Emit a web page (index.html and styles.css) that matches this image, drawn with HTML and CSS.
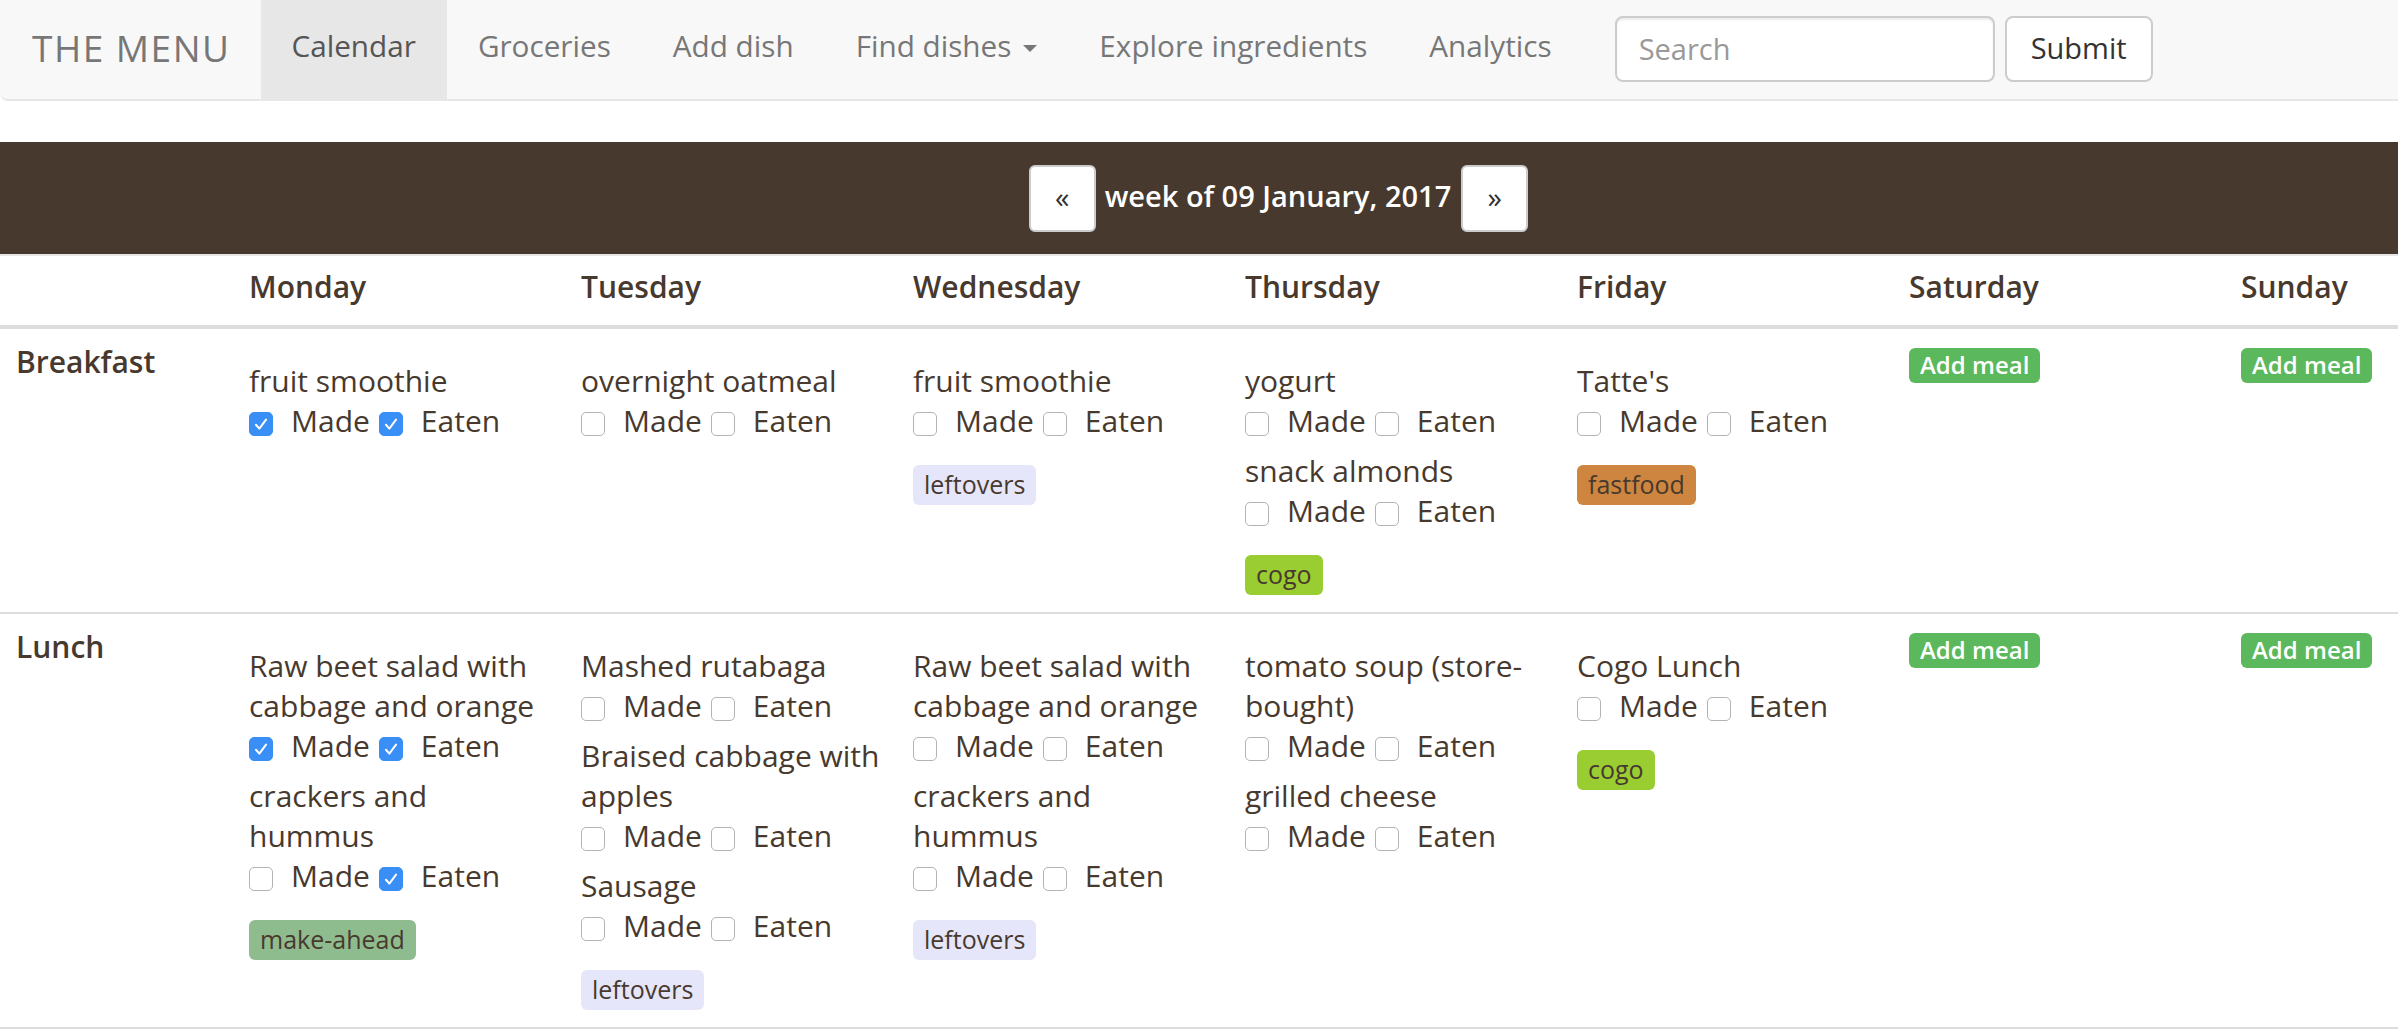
FILE: index.html
```html
<!DOCTYPE html>
<html lang="en">
<head>
<meta charset="utf-8">
<title>The Menu</title>
<link rel="stylesheet" href="styles.css">
</head>
<body>
<nav class="navbar">
  <a class="brand">THE MENU</a>
  <ul class="nav">
    <li class="active"><a>Calendar</a></li>
    <li><a>Groceries</a></li>
    <li><a>Add dish</a></li>
    <li><a>Find dishes<span class="caret"></span></a></li>
    <li><a>Explore ingredients</a></li>
    <li><a>Analytics</a></li>
  </ul>
  <form class="search">
    <input class="search-input" type="text" placeholder="Search">
    <button class="submit" type="button">Submit</button>
  </form>
</nav>

<div class="page">
  <div class="sheet">
    <div class="weekbar">
      <button class="pager" type="button">&laquo;</button>
      <span class="week">week of 09 January, 2017</span>
      <button class="pager" type="button">&raquo;</button>
    </div>

    <div class="row head">
      <div class="cell"></div>
      <div class="cell">Monday</div>
      <div class="cell">Tuesday</div>
      <div class="cell">Wednesday</div>
      <div class="cell">Thursday</div>
      <div class="cell">Friday</div>
      <div class="cell">Saturday</div>
      <div class="cell">Sunday</div>
    </div>

    <div class="row">
      <div class="cell label">Breakfast</div>
      <div class="cell">
        <div class="meals">
          <div class="dish"><div class="name">fruit smoothie</div>
            <div class="checks"><span class="cb on"><svg viewBox="0 0 24 24"><path d="M6.5 12.8 L10.2 17 L17.5 7.2"/></svg></span><span class="ck">Made</span><span class="cb on"><svg viewBox="0 0 24 24"><path d="M6.5 12.8 L10.2 17 L17.5 7.2"/></svg></span><span class="ck">Eaten</span></div>
          </div>
        </div>
      </div>
      <div class="cell">
        <div class="meals">
          <div class="dish"><div class="name">overnight oatmeal</div>
            <div class="checks"><span class="cb"></span><span class="ck">Made</span><span class="cb"></span><span class="ck">Eaten</span></div>
          </div>
        </div>
      </div>
      <div class="cell">
        <div class="meals">
          <div class="dish"><div class="name">fruit smoothie</div>
            <div class="checks"><span class="cb"></span><span class="ck">Made</span><span class="cb"></span><span class="ck">Eaten</span></div>
          </div>
        </div>
        <div class="tags"><span class="tag lavender">leftovers</span></div>
      </div>
      <div class="cell">
        <div class="meals">
          <div class="dish"><div class="name">yogurt</div>
            <div class="checks"><span class="cb"></span><span class="ck">Made</span><span class="cb"></span><span class="ck">Eaten</span></div>
          </div>
          <div class="dish"><div class="name">snack almonds</div>
            <div class="checks"><span class="cb"></span><span class="ck">Made</span><span class="cb"></span><span class="ck">Eaten</span></div>
          </div>
        </div>
        <div class="tags"><span class="tag yellowgreen">cogo</span></div>
      </div>
      <div class="cell">
        <div class="meals">
          <div class="dish"><div class="name">Tatte's</div>
            <div class="checks"><span class="cb"></span><span class="ck">Made</span><span class="cb"></span><span class="ck">Eaten</span></div>
          </div>
        </div>
        <div class="tags"><span class="tag peru">fastfood</span></div>
      </div>
      <div class="cell"><button class="add" type="button">Add meal</button></div>
      <div class="cell"><button class="add" type="button">Add meal</button></div>
    </div>

    <div class="row">
      <div class="cell label">Lunch</div>
      <div class="cell">
        <div class="meals">
          <div class="dish"><div class="name">Raw beet salad with cabbage and orange</div>
            <div class="checks"><span class="cb on"><svg viewBox="0 0 24 24"><path d="M6.5 12.8 L10.2 17 L17.5 7.2"/></svg></span><span class="ck">Made</span><span class="cb on"><svg viewBox="0 0 24 24"><path d="M6.5 12.8 L10.2 17 L17.5 7.2"/></svg></span><span class="ck">Eaten</span></div>
          </div>
          <div class="dish"><div class="name">crackers and hummus</div>
            <div class="checks"><span class="cb"></span><span class="ck">Made</span><span class="cb on"><svg viewBox="0 0 24 24"><path d="M6.5 12.8 L10.2 17 L17.5 7.2"/></svg></span><span class="ck">Eaten</span></div>
          </div>
        </div>
        <div class="tags"><span class="tag seagreen">make-ahead</span></div>
      </div>
      <div class="cell">
        <div class="meals">
          <div class="dish"><div class="name">Mashed rutabaga</div>
            <div class="checks"><span class="cb"></span><span class="ck">Made</span><span class="cb"></span><span class="ck">Eaten</span></div>
          </div>
          <div class="dish"><div class="name">Braised cabbage with apples</div>
            <div class="checks"><span class="cb"></span><span class="ck">Made</span><span class="cb"></span><span class="ck">Eaten</span></div>
          </div>
          <div class="dish"><div class="name">Sausage</div>
            <div class="checks"><span class="cb"></span><span class="ck">Made</span><span class="cb"></span><span class="ck">Eaten</span></div>
          </div>
        </div>
        <div class="tags"><span class="tag lavender">leftovers</span></div>
      </div>
      <div class="cell">
        <div class="meals">
          <div class="dish"><div class="name">Raw beet salad with cabbage and orange</div>
            <div class="checks"><span class="cb"></span><span class="ck">Made</span><span class="cb"></span><span class="ck">Eaten</span></div>
          </div>
          <div class="dish"><div class="name">crackers and hummus</div>
            <div class="checks"><span class="cb"></span><span class="ck">Made</span><span class="cb"></span><span class="ck">Eaten</span></div>
          </div>
        </div>
        <div class="tags"><span class="tag lavender">leftovers</span></div>
      </div>
      <div class="cell">
        <div class="meals">
          <div class="dish"><div class="name">tomato soup (store-bought)</div>
            <div class="checks"><span class="cb"></span><span class="ck">Made</span><span class="cb"></span><span class="ck">Eaten</span></div>
          </div>
          <div class="dish"><div class="name">grilled cheese</div>
            <div class="checks"><span class="cb"></span><span class="ck">Made</span><span class="cb"></span><span class="ck">Eaten</span></div>
          </div>
        </div>
      </div>
      <div class="cell">
        <div class="meals">
          <div class="dish"><div class="name">Cogo Lunch</div>
            <div class="checks"><span class="cb"></span><span class="ck">Made</span><span class="cb"></span><span class="ck">Eaten</span></div>
          </div>
        </div>
        <div class="tags"><span class="tag yellowgreen">cogo</span></div>
      </div>
      <div class="cell"><button class="add" type="button">Add meal</button></div>
      <div class="cell"><button class="add" type="button">Add meal</button></div>
    </div>
  </div>
</div>
</body>
</html>
```

FILE: styles.css
```css
html, body {
  margin: 0;
  padding: 0;
  background: #ffffff;
}
body {
  font-family: "Open Sans", "Noto Sans", sans-serif;
  font-size: 30px;
  line-height: 40px;
  color: #48392e;
  overflow-x: hidden;
}

/* navbar */
.navbar {
  display: flex;
  align-items: stretch;
  height: 99px;
  background: #f8f8f8;
  border-bottom: 2px solid #e7e7e7;
  border-bottom-left-radius: 8px;
}
.brand {
  display: flex;
  align-items: center;
  padding: 0 30px 4px 32px;
  font-size: 37px;
  letter-spacing: 1.5px;
  color: #777777;
}
.nav {
  display: flex;
  list-style: none;
  margin: 0;
  padding: 0;
}
.nav li {
  display: flex;
}
.nav a {
  display: flex;
  align-items: center;
  padding: 0 31px 7px 31px;
  color: #777777;
  font-size: 29.7px;
}
.nav li.active a {
  background: #e7e7e7;
  color: #555555;
}
.caret {
  display: inline-block;
  width: 0;
  height: 0;
  margin-left: 12px;
  margin-top: 4px;
  border-top: 7px solid #777777;
  border-left: 7px solid transparent;
  border-right: 7px solid transparent;
}
.search {
  display: flex;
  align-items: center;
  gap: 10px;
  margin: 0 0 0 32px;
  padding-bottom: 2px;
}
.search-input {
  box-sizing: border-box;
  width: 380px;
  height: 66px;
  padding: 0 22px;
  border: 2px solid #cccccc;
  border-radius: 8px;
  font-family: "Open Sans", "Noto Sans", sans-serif;
  font-size: 29px;
  color: #555555;
  background: #ffffff;
  box-shadow: inset 0 2px 2px rgba(0,0,0,0.075);
}
.search-input::placeholder {
  color: #999999;
}
.submit {
  box-sizing: border-box;
  width: 148px;
  height: 66px;
  border: 2px solid #cccccc;
  border-radius: 8px;
  background: #ffffff;
  color: #333333;
  font-family: "Open Sans", "Noto Sans", sans-serif;
  font-size: 29px;
  padding: 0 0 3px 0;
}

/* page */
.page {
  margin-top: 41px;
  width: 100%;
  overflow: hidden;
}
.sheet {
  width: 2557px;
}
.weekbar {
  display: flex;
  align-items: center;
  justify-content: center;
  gap: 9px;
  height: 112px;
  background: #48392e;
}
.pager {
  box-sizing: border-box;
  width: 67px;
  height: 67px;
  border: 2px solid #cccccc;
  border-radius: 6px;
  background: #ffffff;
  color: #333333;
  font-family: "Open Sans", "Noto Sans", sans-serif;
  font-size: 29px;
  padding: 0 0 4px 0;
}
.week {
  color: #ffffff;
  font-weight: 600;
  font-size: 29px;
  padding: 0 1px 5px 0;
}

/* table rows */
.row {
  display: grid;
  grid-template-columns: 233px repeat(7, 332px);
  border-bottom: 2px solid #dddddd;
}
.row.head {
  border-top: 2px solid #e6e6e6;
  border-bottom: 4px solid #dddddd;
}
.cell {
  padding: 12px 12px 17px 16px;
}
.row.head .cell {
  padding: 11px 16px 18px 16px;
  font-weight: 600;
}
.cell.label {
  font-weight: 600;
  padding-top: 13px;
}
.meals {
  margin-top: 20px;
}
.dish {
  margin-bottom: 10px;
}
.checks {
  display: flex;
  align-items: center;
  height: 40px;
}
.cb {
  box-sizing: border-box;
  display: flex;
  align-items: center;
  justify-content: center;
  width: 24px;
  height: 24px;
  margin-top: 6px;
  border: 1.5px solid #b3b3b3;
  border-radius: 5px;
  background: #ffffff;
}
.cb.on {
  background: #3a8ff6;
  border-color: #3a8ff6;
}
.cb svg {
  width: 22px;
  height: 22px;
  fill: none;
  stroke: #ffffff;
  stroke-width: 2.2;
  stroke-linecap: round;
  stroke-linejoin: round;
}
.ck {
  margin-left: 18px;
  margin-right: 9px;
}
.tags {
  margin-top: 24px;
  display: flex;
}
.tag {
  display: inline-block;
  height: 40px;
  line-height: 39px;
  padding: 0 11px;
  border-radius: 6px;
  font-size: 25px;
  color: #48392e;
}
.lavender { background: #e6e6fa; }
.yellowgreen { background: #9acd32; }
.peru { background: #cd853f; }
.seagreen { background: #8fbc8f; }

.add {
  margin-top: 7px;
  height: 35px;
  padding: 0 11px 2px 11px;
  border: 0;
  border-radius: 6px;
  background: #5cb85c;
  color: #ffffff;
  font-family: "Open Sans", "Noto Sans", sans-serif;
  font-size: 24px;
  font-weight: 600;
  line-height: 33px;
}
```
